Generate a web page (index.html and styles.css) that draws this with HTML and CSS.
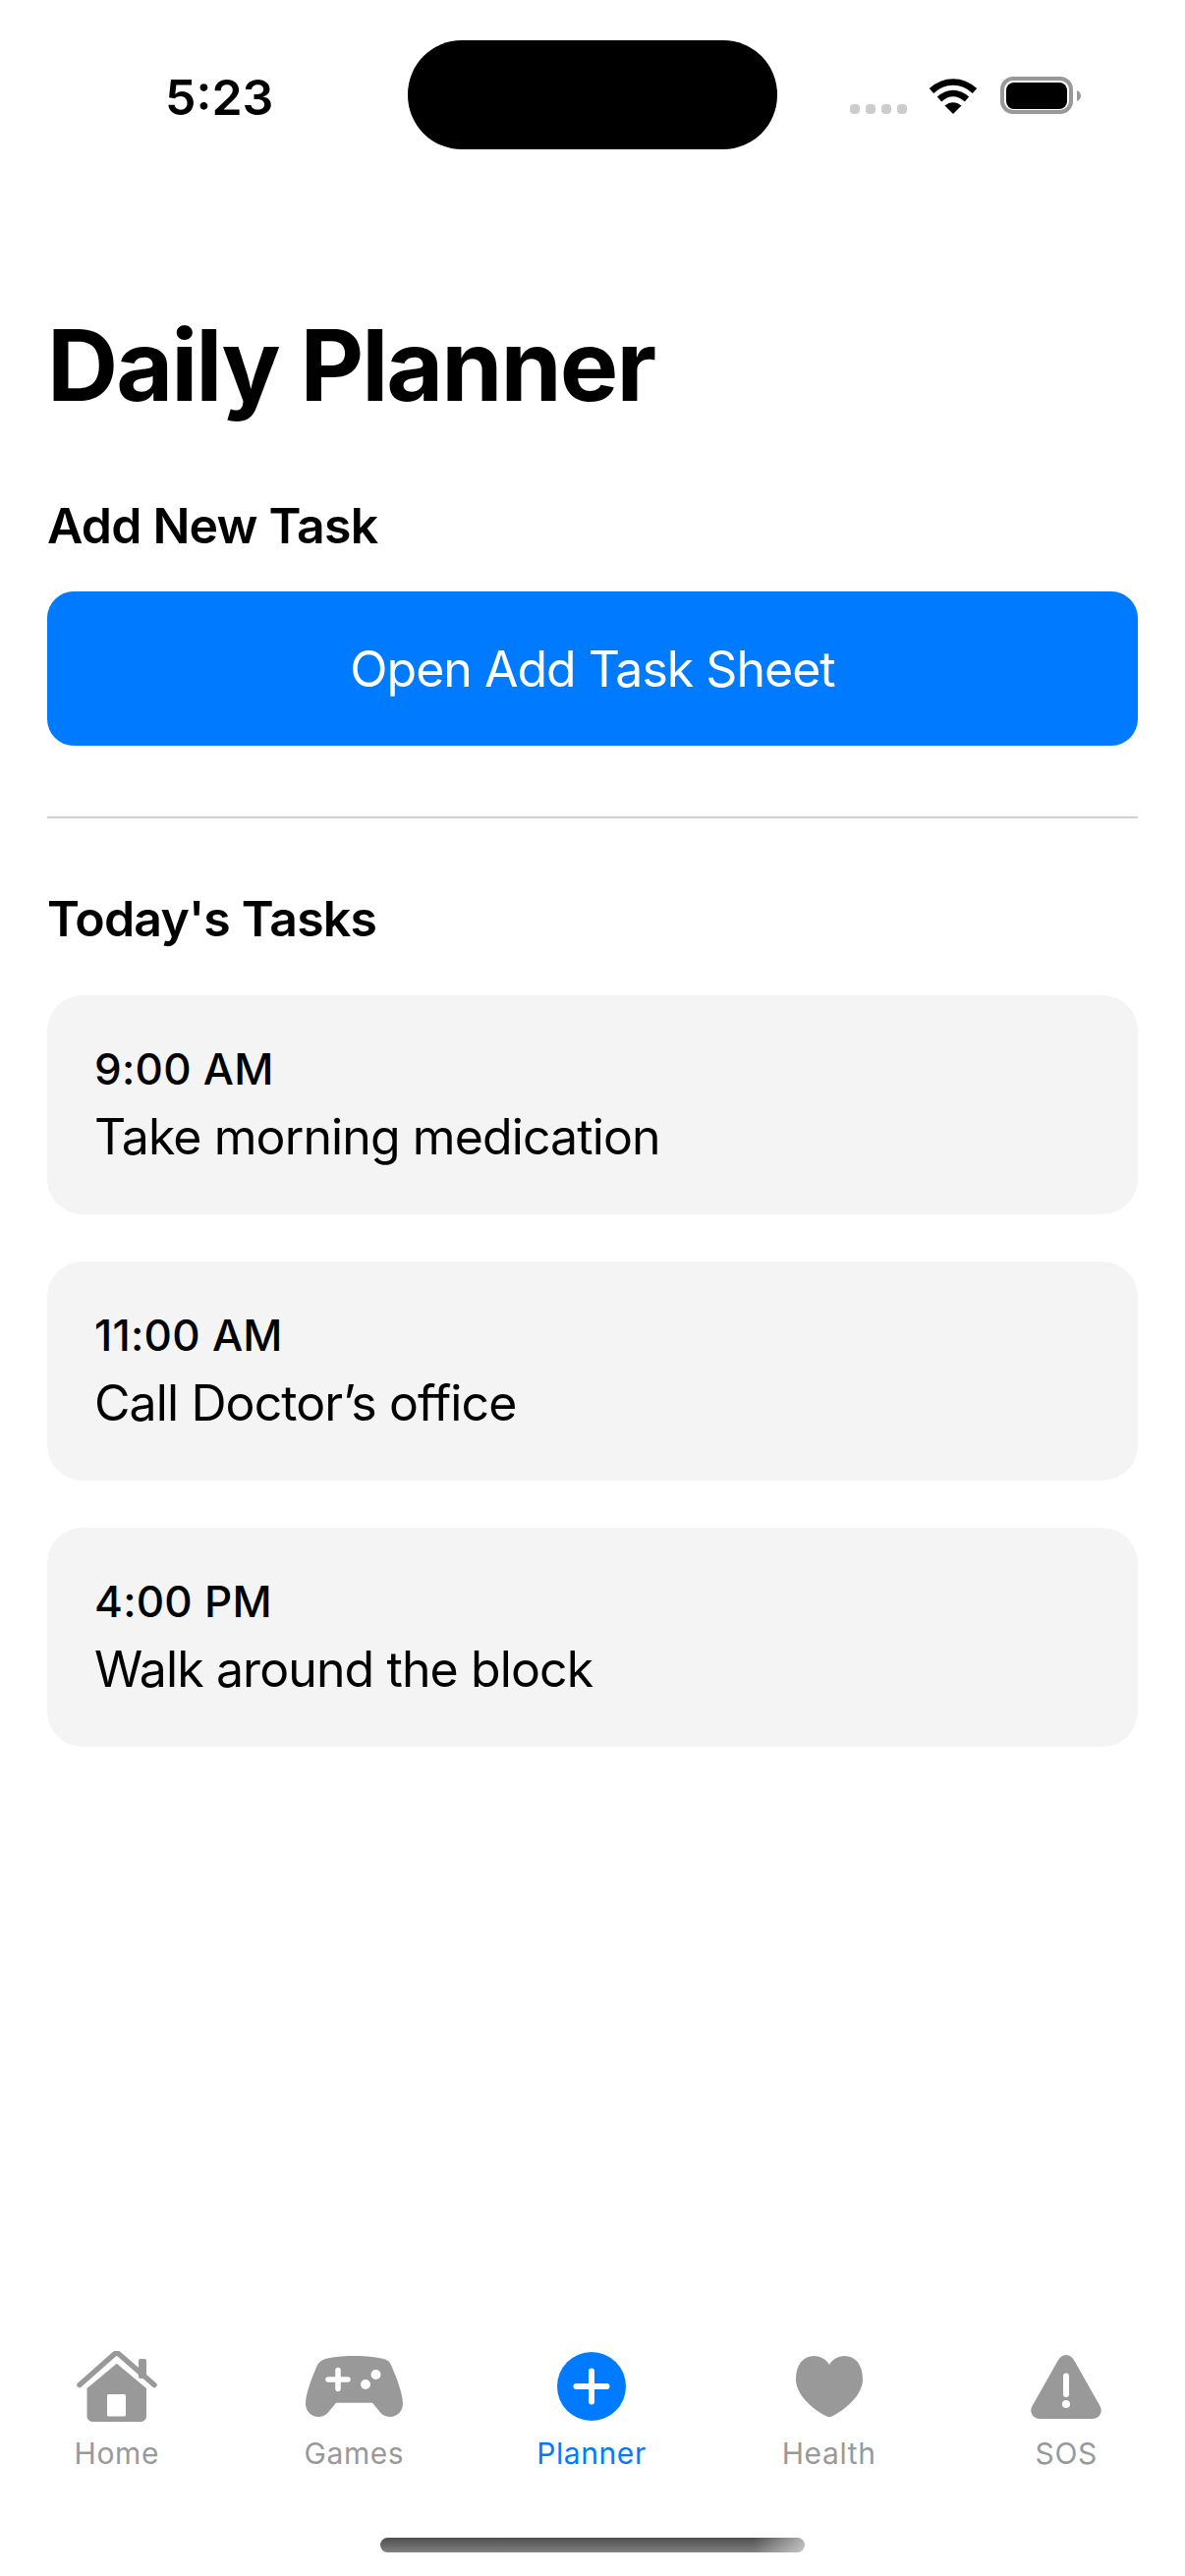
FILE: index.html
```html
<!DOCTYPE html>
<html lang="en">
<head>
    <meta charset="UTF-8">
    <meta name="viewport" content="width=device-width, initial-scale=1.0">
    <title>Daily Planner</title>
    <link rel="stylesheet" href="styles.css">
</head>
<body>
    <div class="status-bar">
        <div class="status-time">5:23</div>
        <div class="island"></div>
        <div class="status-icons">
            <div class="signal-dots"><span></span><span></span><span></span><span></span></div>
            <svg class="wifi" width="50" height="37" viewBox="0 0 50 37">
                <path d="M3 13.5C16 1.5 34 1.5 47 13.5" fill="none" stroke="#000" stroke-width="6.5"/>
                <path d="M11 22C20 14 30 14 39 22" fill="none" stroke="#000" stroke-width="6.5"/>
                <path d="M25 37L16.5 28.5C22 24 28 24 33.5 28.5Z" fill="#000"/>
            </svg>
            <svg class="battery" width="82" height="38" viewBox="0 0 82 38">
                <rect x="2" y="2" width="70" height="34" rx="11" fill="none" stroke="#999" stroke-width="4"/>
                <rect x="6" y="6" width="62" height="27" rx="8" fill="#000"/>
                <path d="M78 14C80.500 15 82 17 82 19.500C82 22 80.500 24 78 25Z" fill="#999"/>
            </svg>
        </div>
    </div>

    <div class="content">
        <h1 class="page-title">Daily Planner</h1>

        <h2 class="section-title">Add New Task</h2>
        <div class="add-button">Open Add Task Sheet</div>

        <div class="divider"></div>

        <h2 class="section-title tasks-title">Today's Tasks</h2>
        <div class="task-list">
            <div class="task-card">
                <div class="task-time">9:00 AM</div>
                <div class="task-name">Take morning medication</div>
            </div>
            <div class="task-card">
                <div class="task-time">11:00 AM</div>
                <div class="task-name">Call Doctor’s office</div>
            </div>
            <div class="task-card">
                <div class="task-time">4:00 PM</div>
                <div class="task-name">Walk around the block</div>
            </div>
        </div>
    </div>

    <div class="tab-bar">
        <div class="tab">
            <div class="tab-icon">
                <svg width="82" height="72" viewBox="0 0 82 72">
                    <path d="M3 34.500L38 3.500C39.500 2 42 2 43.500 3.500L79 34.500" fill="none" stroke="#999" stroke-width="5.500" stroke-linecap="round" stroke-linejoin="round"/>
                    <rect x="63" y="8" width="8" height="20" rx="2" fill="#999"/>
                    <path d="M40.800 12.700L71 38V66C71 69.500 68.500 72 65 72H16.500C13 72 10.500 69.500 10.500 66V38Z" fill="#999"/>
                    <rect x="31" y="44" width="19" height="22.500" rx="1.500" fill="#fff"/>
                </svg>
            </div>
            <div class="tab-label">Home</div>
        </div>
        <div class="tab">
            <div class="tab-icon">
                <svg width="99" height="62" viewBox="0 0 99 62">
                    <path d="M16 5C20 1.500 36 0 49.500 0C63 0 79 1.500 84 5C86 7 87 9 88 11.500C92 21 99 38 99 48.500C99 56.500 93 62 86 62C80 62 77 59 74 55L68 47.700H31L25 55C22 59 19 62 13 62C6 62 0 56.500 0 48.500C0 38 7 21 11 11.500C12 9 13 7 16 5Z" fill="#999"/>
                    <path d="M33 14.500V33.500M23 24H43" fill="none" stroke="#fff" stroke-width="5.500" stroke-linecap="round"/>
                    <circle cx="71.500" cy="19" r="5" fill="#fff"/>
                    <circle cx="61" cy="29" r="5" fill="#fff"/>
                </svg>
            </div>
            <div class="tab-label">Games</div>
        </div>
        <div class="tab tab-active">
            <div class="tab-icon">
                <svg width="70" height="70" viewBox="0 0 70 70">
                    <circle cx="35" cy="35" r="35" fill="#007aff"/>
                    <path d="M35 19.500V50.500M19.500 35H50.500" fill="none" stroke="#fff" stroke-width="6" stroke-linecap="round"/>
                </svg>
            </div>
            <div class="tab-label">Planner</div>
        </div>
        <div class="tab">
            <div class="tab-icon">
                <svg width="68" height="63" viewBox="0 0 68 63">
                    <path d="M34 9C37 3.500 43 0 49.500 0C60 0 68 8 68 24C68 40 50 55 36.500 61.500C35 62.300 33 62.300 31.500 61.500C18 55 0 40 0 24C0 8 8 0 18.500 0C25 0 31 3.500 34 9Z" fill="#999"/>
                </svg>
            </div>
            <div class="tab-label">Health</div>
        </div>
        <div class="tab">
            <div class="tab-icon">
                <svg width="72" height="65" viewBox="0 0 72 65">
                    <path d="M27.500 6C31.500 -2 40.500 -2 44.500 6L70.500 52C74 58.500 69.500 65 63 65H9C2.500 65 -2 58.500 1.500 52Z" fill="#999"/>
                    <path d="M36 21.500V40" fill="none" stroke="#fff" stroke-width="6" stroke-linecap="round"/>
                    <circle cx="36" cy="50" r="4" fill="#fff"/>
                </svg>
            </div>
            <div class="tab-label">SOS</div>
        </div>
    </div>
    <div class="home-indicator"></div>
</body>
</html>
```

FILE: styles.css
```css
body {
    margin: 0;
    width: 1206px;
    height: 2622px;
    display: flex;
    flex-direction: column;
    background-color: #fff;
    font-family: 'Inter', 'Liberation Sans', sans-serif;
    color: #000;
    overflow: hidden;
}

/* status bar */
.status-bar {
    display: flex;
    height: 111px;
    padding-top: 41px;
}
.status-time {
    width: 247px;
    padding: 30px 0 0 168px;
    font-size: 50px;
    line-height: 56px;
    font-weight: 600;
}
.island {
    width: 376px;
    height: 111px;
    background-color: #000;
    border-radius: 55px;
}
.status-icons {
    display: flex;
    align-items: flex-end;
    height: 38px;
    margin: 37px 0 0 74px;
}
.signal-dots {
    display: flex;
    gap: 6px;
    margin-right: 22px;
}
.signal-dots span {
    width: 10px;
    height: 10px;
    border-radius: 4px;
    background-color: #ccc;
}
.wifi {
    margin-right: 23px;
}

/* main area */
.content {
    flex: 1;
    padding: 0 48px;
}
.page-title {
    margin: 160px 0 0;
    font-size: 100px;
    line-height: 120px;
    font-weight: 700;
    letter-spacing: -2px;
}
.section-title {
    margin: 0;
    font-size: 50px;
    line-height: 60px;
    font-weight: 600;
    letter-spacing: -0.8px;
}
.page-title + .section-title {
    margin-top: 73px;
}
.add-button {
    height: 157px;
    margin-top: 37px;
    display: flex;
    align-items: center;
    justify-content: center;
    background-color: #007aff;
    border-radius: 27px;
    color: #fff;
    font-size: 50px;
    letter-spacing: -1px;
}
.divider {
    height: 2px;
    margin-top: 72px;
    background-color: #d0d0d0;
}
.tasks-title {
    margin-top: 72px;
}
.task-list {
    display: flex;
    flex-direction: column;
    gap: 48px;
    margin-top: 48px;
}
.task-card {
    height: 223px;
    box-sizing: border-box;
    padding: 47px 48px 0;
    background-color: #f4f4f4;
    border-radius: 36px;
}
.task-time {
    font-size: 44px;
    line-height: 56px;
    font-weight: 500;
    letter-spacing: 0.25px;
}
.task-name {
    margin-top: 11px;
    font-size: 50px;
    line-height: 60px;
    letter-spacing: -0.9px;
}

/* bottom tabs */
.tab-bar {
    display: grid;
    grid-template-columns: repeat(5, 1fr);
    margin-left: -2px;
}
.tab {
    display: flex;
    flex-direction: column;
    align-items: center;
    color: #999;
}
.tab-active {
    color: #007aff;
}
.tab-icon {
    height: 72px;
    display: flex;
    align-items: center;
}
.tab-label {
    margin-top: 14px;
    font-size: 30px;
    line-height: 36px;
    letter-spacing: 0.6px;
}
.home-indicator {
    width: 432px;
    height: 15px;
    margin: 68px 0 24px 387px;
    border-radius: 8px;
    background:
        linear-gradient(90deg, rgba(255, 255, 255, 0) 88%, rgba(255, 255, 255, 0.55) 100%),
        linear-gradient(180deg, #4f4f4f, #808080);
}
```
